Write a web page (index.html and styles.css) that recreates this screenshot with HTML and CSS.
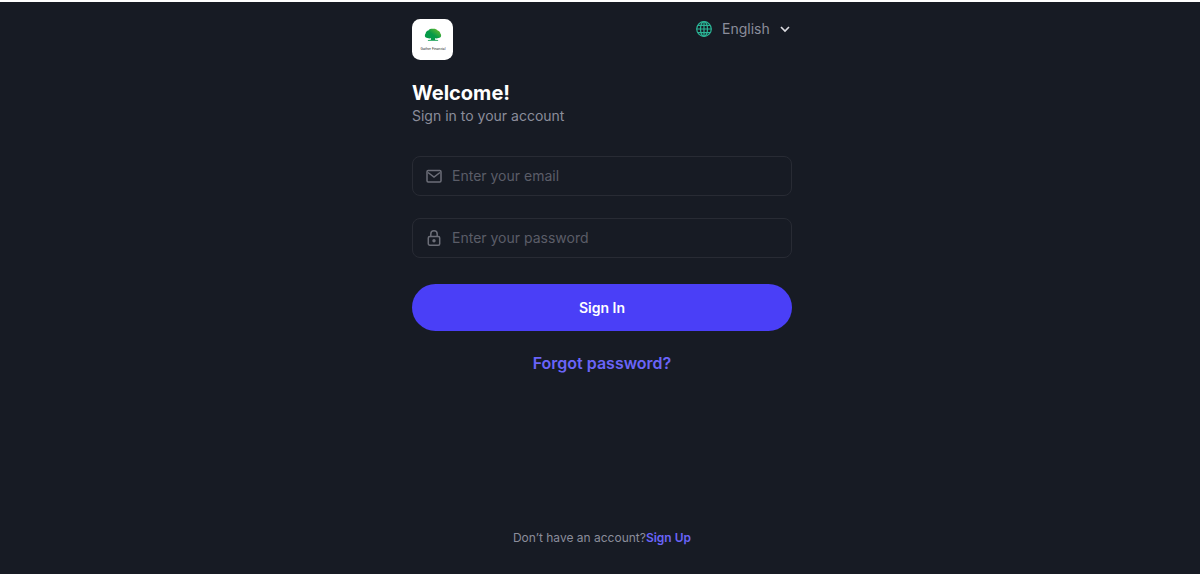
FILE: index.html
```html
<!DOCTYPE html>
<html lang="en">
<head>
    <meta charset="UTF-8"/>
    <meta name="viewport" content="width=device-width, initial-scale=1"/>
    <title>Sign In</title>
    <link rel="stylesheet" href="styles.css">
</head>
<body>
<div class="page">
    <header class="login-header">
        <svg class="logo" viewBox="0 0 40 40" role="img" aria-label="Gather Financial">
            <defs>
                <linearGradient id="leaf" x1="0" y1="1" x2="1" y2="0">
                    <stop offset="0.5" stop-color="#069a48"/>
                    <stop offset="1" stop-color="#7cc02c"/>
                </linearGradient>
            </defs>
            <rect width="40" height="40" rx="8" fill="#fff"/>
            <path fill="url(#leaf)" d="M15 18.500C12.500 18.500 12 16 13.200 14.500C13.500 12.500 14.500 11.500 16 11.200C17 9.700 18.800 9.500 20.500 9.600C22.500 9.500 24.200 10 25 11.200C26.800 11.800 27.500 13 27.800 14.500C29 16 28.500 18.500 26 18.500C25 19 23.500 19 22.500 18.800V20.300L25.500 20.600V21.300H15.500V20.600L18.500 20.300V18.800C17.500 19 16 19 15 18.500Z"/>
            <text x="20.500" y="30" text-anchor="middle" font-family="Noto Sans, sans-serif" font-size="3.200" fill="#111">Gather Financial</text>
        </svg>
        <div class="language">
            <svg class="globe" viewBox="0 0 16 16" aria-hidden="true">
                <circle cx="8" cy="8" r="7.300"/>
                <ellipse cx="8" cy="8" rx="3.500" ry="7.300"/>
                <path d="M8 .7V15.300M.7 8H15.300M1.800 4.300H14.200M1.800 11.700H14.200"/>
            </svg>
            <select id="language" aria-label="Language">
                <option>English</option>
            </select>
            <svg class="arrow" viewBox="0 0 10 10" aria-hidden="true">
                <path d="M1 3L5 7L9 3"/>
            </svg>
        </div>
    </header>

    <main>
        <h1>Welcome!</h1>
        <p class="subtitle">Sign in to your account</p>

        <form class="login-form">
            <label class="login-input" for="email">
                <svg viewBox="0 0 16 16" aria-label="Email">
                    <rect x="1" y="2.500" width="14" height="11.500" rx="1.200"/>
                    <path d="M2 4.500L8 9L14 4.500"/>
                </svg>
                <input type="email" id="email" placeholder="Enter your email"/>
            </label>
            <label class="login-input" for="password">
                <svg viewBox="0 0 16 16" aria-label="Password">
                    <rect x="2.300" y="6.500" width="11.400" height="8.700" rx="1.500"/>
                    <path d="M4.800 6.500V4A3.200 3.200 0 0 1 11.200 4V6.500"/>
                    <circle class="keyhole" cx="8" cy="10.700" r="1.700"/>
                </svg>
                <input type="password" id="password" placeholder="Enter your password"/>
            </label>
            <button type="submit" class="login-button">Sign In</button>
        </form>
        <a class="forgot" href="#">Forgot password?</a>
    </main>

    <footer class="login-footer">Don’t have an account?<a href="#">Sign Up</a></footer>
</div>
</body>
</html>
```
FILE: styles.css
```css
* {
    margin: 0;
    padding: 0;
    box-sizing: border-box;
}

body {
    background-color: #171b24;
    color: #8b8d9b;
    font-family: Inter, "Liberation Sans", sans-serif;
    font-size: 14px;
    line-height: 20px;
}

a {
    color: #6a64f8;
    font-weight: 600;
    text-decoration: none;
}

.page {
    display: flex;
    flex-direction: column;
    align-items: center;
    min-height: 100vh;
    padding: 17px 16px 26px 20px;
    border-top: 2px solid #fff;
}

.login-header,
main {
    width: 100%;
    max-width: 380px;
}

.login-header {
    display: flex;
    align-items: flex-start;
    justify-content: space-between;
    margin-bottom: 20px;
}

.logo {
    width: 41px;
    height: 41px;
}

.language {
    display: flex;
    align-items: center;
    gap: 10px;
}

.language select {
    appearance: none;
    border: 0;
    background: none;
    color: inherit;
    font: inherit;
    line-height: 20px;
}

.globe {
    width: 16px;
    height: 16px;
    fill: none;
    stroke: #2bb596;
    stroke-width: 1.2;
}

.arrow {
    width: 10px;
    height: 10px;
    margin-right: 2px;
    fill: none;
    stroke: #dddde2;
    stroke-width: 1.6;
}

h1 {
    color: #fff;
    font-size: 20px;
    font-weight: 700;
    line-height: 26px;
}

.login-form {
    display: flex;
    flex-direction: column;
    gap: 22px;
    margin-top: 30px;
}

.login-input {
    display: flex;
    align-items: center;
    gap: 10px;
    height: 40px;
    padding: 0 13px;
    border: 1px solid #282b34;
    border-radius: 8px;
}

.login-input svg {
    flex: none;
    width: 16px;
    height: 16px;
    fill: none;
    stroke: #6c6e78;
    stroke-width: 1.5;
}

.login-input .keyhole {
    fill: #6c6e78;
    stroke: none;
}

.login-input input {
    flex: 1;
    min-width: 0;
    border: 0;
    outline: none;
    background: none;
    color: #fff;
    font: inherit;
}

.login-input input::placeholder {
    color: #5b5d68;
}

.login-button {
    height: 47px;
    margin-top: 4px;
    border: 0;
    border-radius: 24px;
    background-color: #4a3ff7;
    color: #fff;
    font: inherit;
    font-weight: 600;
    cursor: pointer;
}

.forgot {
    display: block;
    margin-top: 22px;
    font-size: 16px;
    text-align: center;
}

.login-footer {
    margin-top: auto;
    font-size: 12px;
}
```
